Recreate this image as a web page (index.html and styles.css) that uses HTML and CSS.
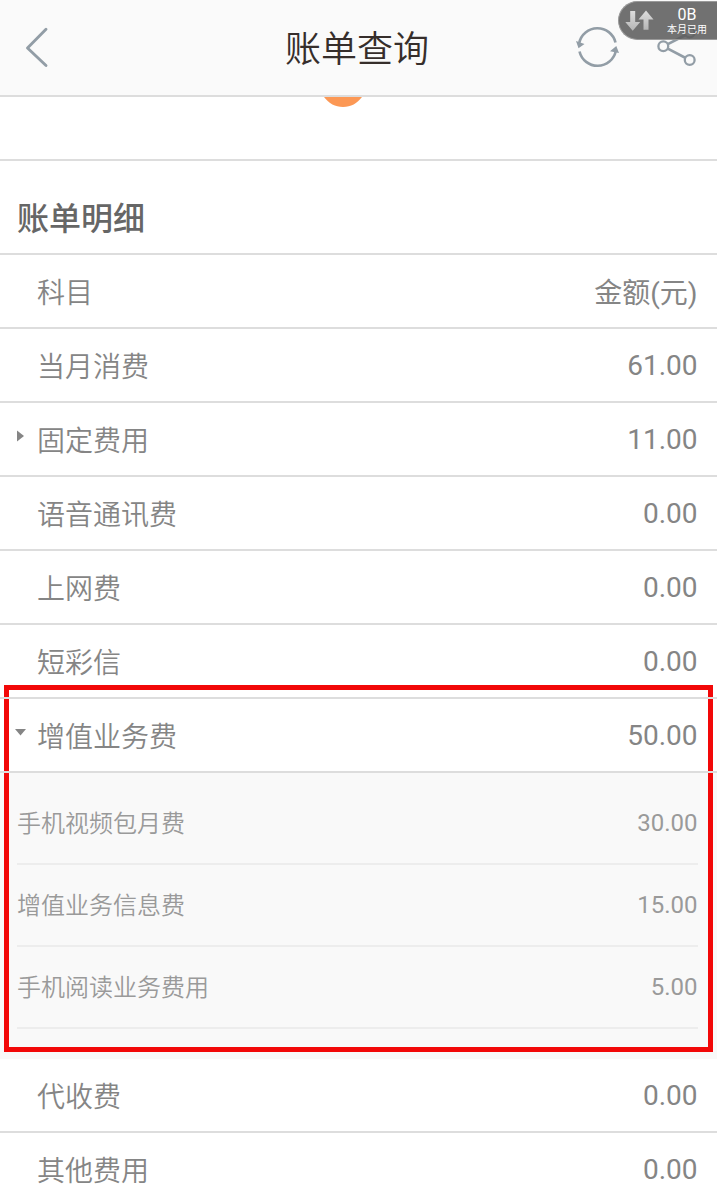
FILE: index.html
```html
<!DOCTYPE html>
<html lang="zh-CN">
<head>
<meta charset="utf-8">
<title>账单查询</title>
<link rel="stylesheet" href="styles.css">
</head>
<body>
<header class="topbar">
  <svg class="back" width="80" height="95" viewBox="0 0 80 95"><path d="M46 29.300L27.500 48L46 65.500" fill="none" stroke="#929da6" stroke-width="2.900" stroke-linecap="round" stroke-linejoin="round"/></svg>
  <h1 class="title">账单查询</h1>
  <svg class="actions" width="160" height="95" viewBox="0 0 160 95">
    <g fill="none" stroke="#929da6" stroke-width="2.600">
      <path d="M22.200 43A18.600 18.600 0 0 1 58.500 42.500"/>
      <path d="M22.500 51.500A18.600 18.600 0 0 0 58.800 51"/>
      <path d="M106.500 46.300L132.500 33M106.500 46.300L132.500 60"/>
    </g>
    <path d="M19 41L27.500 44L21.500 48.200ZM53 51.200L59.300 46L62 53Z" fill="#929da6"/>
    <g fill="#fafafa" stroke="#929da6" stroke-width="2.300"><circle cx="106.300" cy="46.300" r="4.900"/><circle cx="132.700" cy="32.500" r="4.900"/><circle cx="132.700" cy="60" r="4.900"/></g>
  </svg>
  <div class="traffic">
    <svg class="arrows" width="29" height="22" viewBox="0 0 29 22">
      <defs><linearGradient id="metal" x1="0" y1="0" x2="0" y2="1"><stop stop-color="#ddd"/><stop offset="1" stop-color="#b5b5b5"/></linearGradient></defs>
      <path d="M5.200 1H10.200V12H15.200L7.700 20.700L.3 12H5.200Z" fill="url(#metal)"/>
      <path d="M21 .5L28.500 9.500H23.500V19.700H18.500V9.500H13.500Z" fill="url(#metal)"/>
    </svg>
    <div class="usage"><span class="amount">0B</span><span class="period">本月已用</span></div>
  </div>
</header>
<main>
  <div class="summary"><svg width="40" height="10" viewBox="0 0 40 10"><path d="M1 0H39C34 6.500 28 10 20 10S6 6.500 1 0Z" fill="#fc9855"/></svg></div>
  <h2 class="section">账单明细</h2>
  <div class="row"><span class="label">科目</span><span class="label unit">金额(元)</span></div>
  <div class="row"><span class="label">当月消费</span><span>61.00</span></div>
  <div class="row"><svg class="caret" width="12" height="14" viewBox="0 0 12 14"><path d="M2 1.500L9 7L2 12.500Z" fill="#858585"/></svg><span class="label">固定费用</span><span>11.00</span></div>
  <div class="row"><span class="label">语音通讯费</span><span>0.00</span></div>
  <div class="row"><span class="label">上网费</span><span>0.00</span></div>
  <div class="row"><span class="label">短彩信</span><span>0.00</span></div>
  <div class="expanded">
    <div class="row"><svg class="caret down" width="12" height="14" viewBox="0 0 12 14"><path d="M0 4H11L5.500 10.500Z" fill="#858585"/></svg><span class="label">增值业务费</span><span>50.00</span></div>
    <div class="details">
      <div class="item"><span class="label">手机视频包月费</span><span>30.00</span></div>
      <div class="item"><span class="label">增值业务信息费</span><span>15.00</span></div>
      <div class="item"><span class="label">手机阅读业务费用</span><span>5.00</span></div>
    </div>
    <div class="highlight"></div>
  </div>
  <div class="row"><span class="label">代收费</span><span>0.00</span></div>
  <div class="row"><span class="label">其他费用</span><span>0.00</span></div>
</main>
</body>
</html>
```
FILE: styles.css
```css
* { box-sizing: border-box; }
html { overflow: hidden; }
body {
  margin: 0;
  height: 1202px;
  overflow: hidden;
  background: #fff;
  color: #858585;
  font-family: Roboto, "Noto Sans CJK SC", sans-serif;
}
.topbar {
  position: relative;
  display: flex;
  justify-content: space-between;
  height: 97px;
  background: #fafafa;
  border-bottom: 2px solid #ddd;
}
.back { margin-right: 77px; }
.title {
  margin: 0;
  padding-top: 3px;
  color: #362e2b;
  font-size: 36px;
  font-weight: 350;
  line-height: 95px;
  height: 95px;
}
.traffic {
  position: absolute;
  top: 1px;
  right: 0;
  display: flex;
  width: 99px;
  height: 39px;
  padding: 8px 0 0 6px;
  border: 1px solid #999;
  border-right: 0;
  border-radius: 20px 0 0 20px;
  background: rgba(92, 92, 92, .87);
}
.arrows { flex-shrink: 0; }
.usage {
  display: flex;
  flex-shrink: 0;
  flex-direction: column;
  align-items: center;
  width: 66px;
  margin-top: -4px;
  color: #fff;
}
.amount { font-size: 16px; line-height: 17px; }
.period { padding-top: 1px; font-size: 10px; line-height: 12px; white-space: nowrap; }
.summary {
  display: flex;
  justify-content: center;
  height: 64px;
  padding-right: 31px;
  border-bottom: 2px solid #ddd;
}
.section {
  height: 94px;
  margin: 0;
  padding: 12px 17px 0;
  border-bottom: 2px solid #ddd;
  color: #666;
  font-size: 32px;
  font-weight: 500;
  line-height: 92px;
}
.row {
  position: relative;
  z-index: 2;
  display: flex;
  justify-content: space-between;
  height: 74px;
  padding: 1px 19.5px 0 37px;
  border-bottom: 2px solid #ddd;
  font-size: 28px;
  line-height: 72px;
}
.label { padding-top: 2px; font-weight: 350; }
.row .unit { font-weight: 400; }
.caret { position: absolute; left: 15px; top: 26px; }
.caret.down { left: 14.5px; }
.expanded { position: relative; }
.details { height: 286px; padding: 10px 19.5px 0 17px; background: #f9f9f9; }
.item {
  display: flex;
  justify-content: space-between;
  height: 82px;
  border-bottom: 2px solid #ededed;
  color: #9a9a9a;
  font-size: 24px;
  line-height: 80px;
}
.item .label { padding-top: 1px; }
.highlight {
  position: absolute;
  z-index: 1;
  inset: -14px 4px 7px;
  border: 5px solid #f20808;
}
```
